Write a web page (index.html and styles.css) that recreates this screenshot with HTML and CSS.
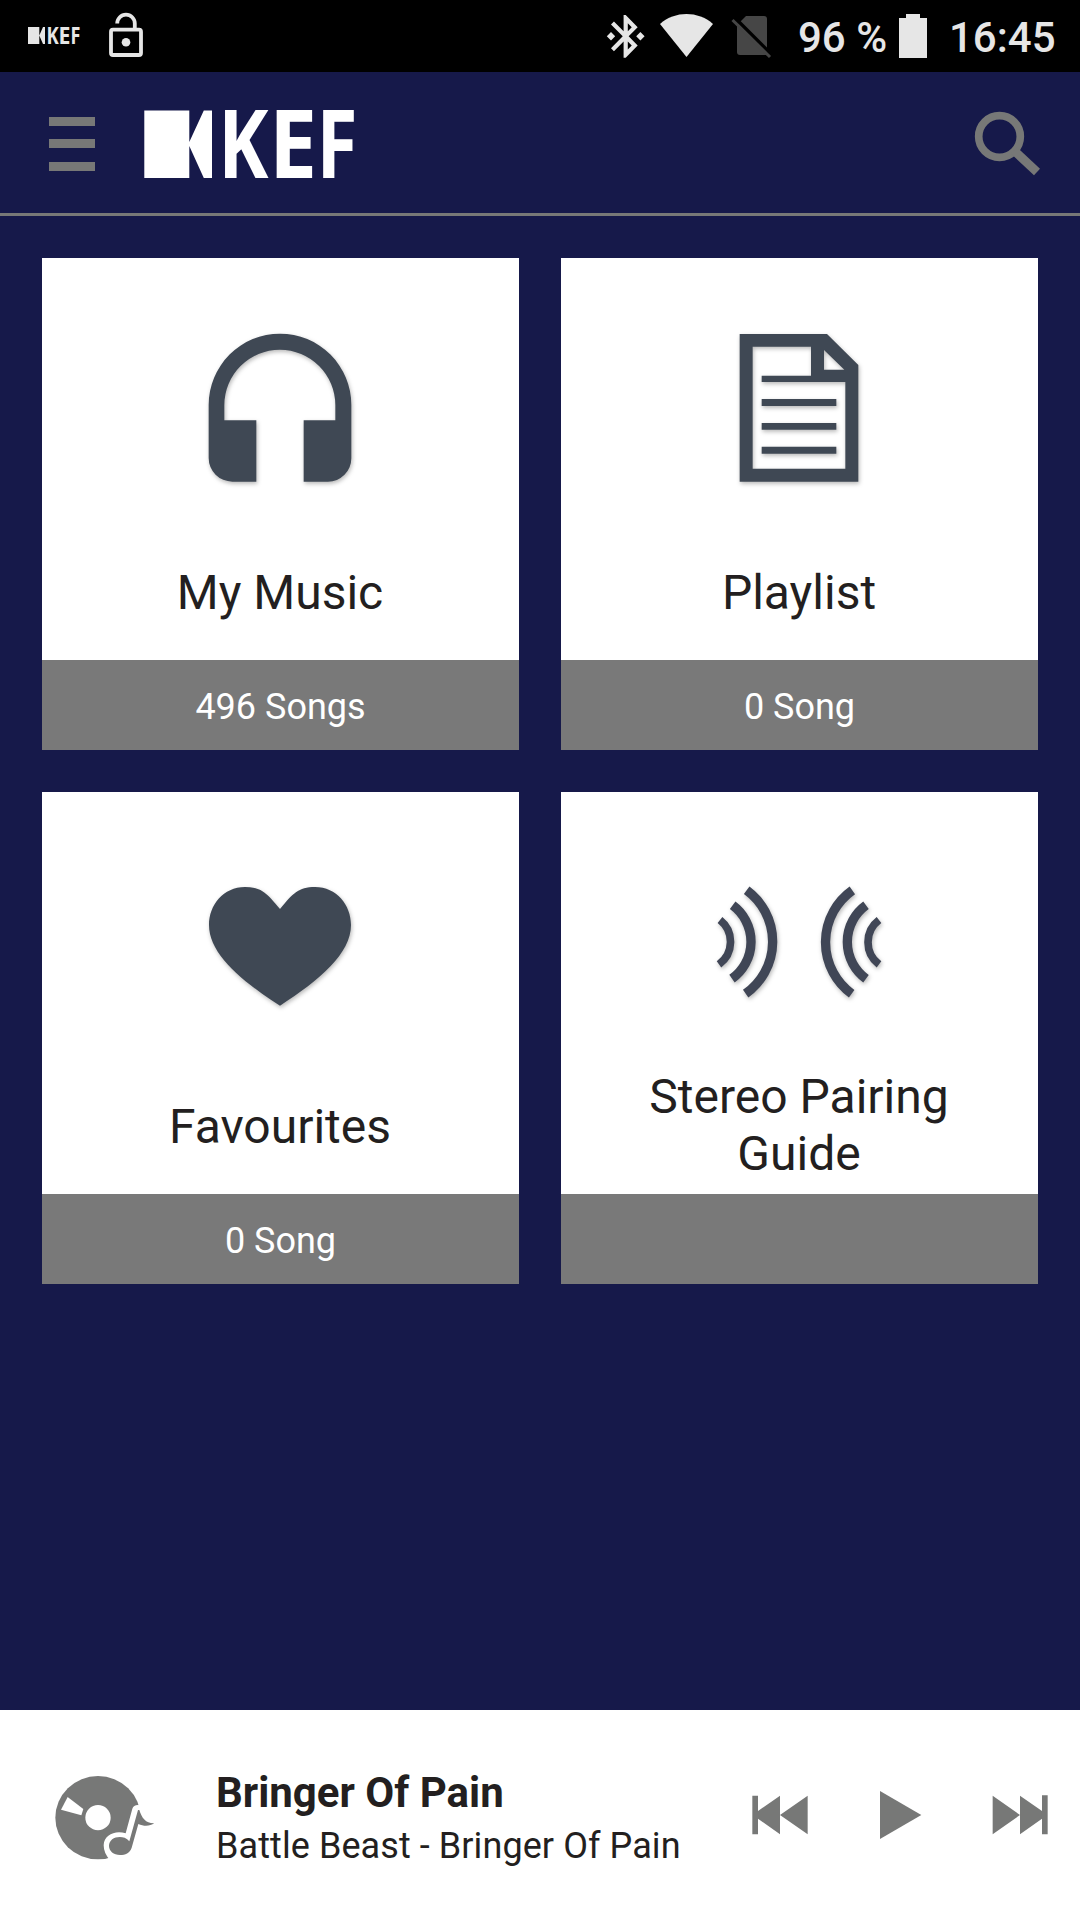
FILE: index.html
```html
<!DOCTYPE html>
<html lang="en">
<head>
<meta charset="utf-8">
<title>KEF</title>
<link rel="stylesheet" href="styles.css">
</head>
<body>
<div class="screen">
  <div class="status">
    <div class="status-left">
      <svg class="mini-logo" width="60" height="72" viewBox="24 0 60 72">
        <path d="M28 27h11.3v8.5L43 27h2v17h-2l-3.7-8.500V44H28z"/>
        <g class="wordmark" font-size="23.600">
          <text transform="translate(46.400 44) scale(.78 1)">K</text>
          <text transform="translate(58.600 44) scale(.9 1)">E</text>
          <text transform="translate(70.400 44) scale(.76 1)">F</text>
        </g>
      </svg>
      <svg width="40" height="72" viewBox="106 0 40 72">
        <rect class="lock-line" x="111" y="29.700" width="30" height="25.300" rx="2"/>
        <path class="lock-line" d="M117.200 23.500A8.800 8.800 0 0 1 134.800 23.500V29"/>
        <circle cx="126" cy="42.300" r="4.300"/>
      </svg>
    </div>
    <div class="status-right">
      <svg width="180" height="72" viewBox="600 0 180 72">
        <g transform="translate(600.500 10.800) scale(2.100 2.130)">
          <path fill-rule="evenodd" d="M17.710 7.710L12 2h-1v7.590L6.410 5 5 6.410 10.590 12 5 17.590 6.410 19 11 14.410V22h1l5.710-5.710-4.300-4.290zM13 5.830l1.880 1.880L13 9.590zM14.880 16.290L13 18.170v-3.760zM7 12l-2-2-2 2 2 2zM19 10l-2 2 2 2 2-2z"/>
        </g>
        <path d="M660 24C675 10.800 698 10.800 713 24L686.500 57z"/>
        <path class="dim" d="M746 16h18q3 0 3 3v36h-27q-3 0-3-3V25z"/>
        <path class="slash-gap" d="M734 17l40 40"/>
        <path class="slash" d="M732.500 20l37.500 37"/>
      </svg>
      <span class="percent">96 %</span>
      <svg width="36" height="72" viewBox="895 0 36 72"><path d="M906 14h14v4h7v40h-28V18h7z"/></svg>
      <span class="clock">16:45</span>
    </div>
  </div>

  <header class="header">
    <div class="menu"><i></i><i></i><i></i></div>
    <svg class="logo" width="216" height="141" viewBox="141 72 216 141">
      <path d="M144.300 110.600H189.300V142L203.800 110.600H212V178H203.800L189.300 146V178H144.300z"/>
      <g class="wordmark" font-size="94.500">
        <text transform="translate(218.300 178) scale(.8 1)">K</text>
        <text transform="translate(269 178) scale(.91 1)">E</text>
        <text transform="translate(316.500 178) scale(.79 1)">F</text>
      </g>
    </svg>
    <svg class="search" width="72" height="141" viewBox="970 72 72 141">
      <circle cx="999.500" cy="136.500" r="20.800"/><path class="handle" d="M1014 150.500l23 21.500"/>
    </svg>
  </header>

  <main class="grid">
    <section class="card">
      <svg class="card-icon" viewBox="0 0 603 645"><path d="M86 285A214 214 0 0 1 514 285V445A70 70 0 0 1 444 515H371V331H466V286A166.500 166.500 0 0 0 133 286V331H229V515H157A71 71 0 0 1 86 444z"/></svg>
      <h2>My Music</h2>
      <p>496 Songs</p>
    </section>
    <section class="card">
      <svg class="card-icon" viewBox="-3 0 603 645"><path fill-rule="evenodd" d="M119 72H381L475 165V515H119zM158 110V476H436V216H185V197H333V110zM372 120V179H433z"/><path d="M185 267H409V288H185zM185 339H409V359H185zM185 410H409V431H185z"/></svg>
      <h2>Playlist</h2>
      <p>0 Song</p>
    </section>
    <section class="card">
      <svg class="card-icon" viewBox="0 -48 603 645"><path d="M300 147C262 101 245 81 195 81C130 81 87 135 87 195C87 280 180 360 300 437C420 360 513 280 513 195C513 135 470 81 405 81C355 81 338 101 300 147z"/></svg>
      <h2>Favourites</h2>
      <p>0 Song</p>
    </section>
    <section class="card">
      <svg class="card-icon waves" viewBox="27 -48 603 645">
        <path stroke-width="23" d="M90 180A83.500 83.500 0 0 1 87 313M567 180A83.500 83.500 0 0 0 567 313"/>
        <path stroke-width="28" d="M128 136A136 136 0 0 1 126 356M528 136A136 136 0 0 0 528 356"/>
        <path stroke-width="28" d="M170 91A191 191 0 0 1 167 401M487 91A191 191 0 0 0 485 401"/>
      </svg>
      <h2 class="two-line">Stereo Pairing Guide</h2>
      <p></p>
    </section>
  </main>

  <footer class="player">
    <svg class="disc" width="110" height="210" viewBox="90 60 330 630">
      <ellipse cx="234" cy="383" rx="128" ry="125"/>
      <circle class="cut" cx="234" cy="383" r="38"/>
      <path class="cut" d="M143 321L190 357L184 376L123 359z"/>
      <path class="cut" d="M317 430L337 356Q341 344 356 345L385 380L350 510H270Q251 490 251 466C252 435 285 420 317 430z"/>
      <path d="M358 360C365 384 378 401 403 400C390 409 372 410 355 402L335 473C329 490 316 495 300 495C281 495 267 483 267 468C267 446 291 436 314 443Q322 446 328 454L354 360z"/>
    </svg>
    <div class="track">
      <div class="track-title">Bringer Of Pain</div>
      <div class="track-artist">Battle Beast - Bringer Of Pain</div>
    </div>
    <div class="controls">
      <svg viewBox="120 -90 240 630"><path d="M157 167H174V213L240 167V283L174 236V283H157zM240 225L323 167V283z"/></svg>
      <svg viewBox="480 -90 240 630"><path d="M540 153L664 225L540 297z"/></svg>
      <svg viewBox="840 -90 240 630"><path d="M878 167L960 225V167L1026 213V166H1043V283H1026V236L960 283V225L878 283z"/></svg>
    </div>
  </footer>
</div>
</body>
</html>
```
FILE: styles.css
```css
* { box-sizing: border-box; margin: 0; padding: 0; }
body { font-family: Roboto, "Noto Sans", sans-serif; color: #231f20; }
svg { display: block; flex: none; }
.screen { display: flex; flex-direction: column; width: 1080px; height: 1920px; background: #16194a; overflow: hidden; }

.status { display: flex; justify-content: space-between; height: 72px; padding: 0 26px 0 24px; background: #000; color: #e6e6e6; fill: #e6e6e6; }
.status-left, .status-right { display: flex; }
.status-left { gap: 22px; }
.status-right { font-size: 42px; font-weight: 500; line-height: 76px; white-space: nowrap; }
.lock-line { fill: none; stroke: #e6e6e6; stroke-width: 3.800px; }
.dim { fill: #464646; }
.slash { stroke: #464646; stroke-width: 3px; }
.slash-gap { stroke: #000; stroke-width: 3.500px; }
.percent { width: 97px; margin-left: 18px; }
.clock { width: 105px; margin-left: 18px; text-align: right; }
.wordmark { font-family: "Open Sans", sans-serif; font-weight: 700; }

.header { display: flex; flex: none; align-items: center; height: 144px; padding: 0 38px 0 49px; border-bottom: 3px solid #777877; }
.menu { display: flex; flex-direction: column; gap: 13.500px; width: 46px; padding-top: 2px; }
.menu i { height: 9px; background: #777877; }
.logo { margin-left: 46px; fill: #fff; }
.search { margin-left: auto; fill: none; stroke: #777877; stroke-width: 7.700px; }
.handle { stroke-width: 8.800px; }

.grid { display: grid; flex: 1; grid-template-columns: 477px 477px; grid-auto-rows: 492px; gap: 42px; padding: 42px; }
.card { display: flex; flex-direction: column; align-items: center; padding-top: 52px; background: #fff; text-align: center; }
.card-icon { width: 201px; height: 215px; fill: #3f4854; filter: drop-shadow(1px 2px 2px rgba(0, 0, 0, .28)); }
.waves { fill: none; stroke: #404656; }
.card h2 { display: flex; align-items: center; width: 340px; height: 135px; margin-right: 1px; justify-content: center; font-size: 48px; font-weight: 400; line-height: 57px; }
.card .two-line { padding-bottom: 4px; }
.card p { width: 100%; height: 90px; padding-top: 2px; background: #797979; color: #fff; font-size: 36px; line-height: 90px; }

.player { display: flex; flex: none; align-items: center; height: 210px; padding: 0 20px 0 50px; background: #fff; fill: #777877; }
.cut { fill: #fff; }
.track { flex: 1; padding: 8px 0 0 56px; white-space: nowrap; }
.track-title { font-size: 42px; font-weight: 700; line-height: 54px; }
.track-artist { font-size: 36px; letter-spacing: .08px; line-height: 52px; }
.controls { display: flex; gap: 40px; }
.controls svg { width: 80px; height: 210px; }
```
